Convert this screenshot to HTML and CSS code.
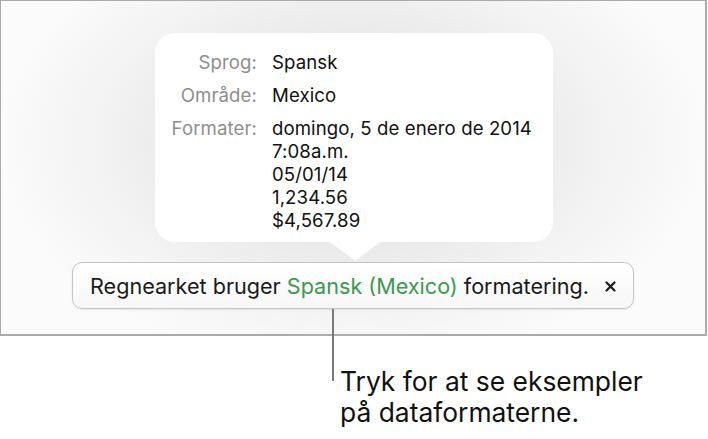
FILE: index.html
```html
<!DOCTYPE html>
<html lang="da">
<head>
<meta charset="utf-8">
<title>Formatering</title>
<link rel="stylesheet" href="styles.css">
</head>
<body>
<div class="frame">
  <div class="popup">
    <div class="label">Sprog:</div>
    <div class="value">Spansk</div>
    <div class="label">Område:</div>
    <div class="value">Mexico</div>
    <div class="label">Formater:</div>
    <div class="value lines">
      <span>domingo, 5 de enero de 2014</span>
      <span>7:08a.m.</span>
      <span>05/01/14</span>
      <span>1,234.56</span>
      <span>$4,567.89</span>
    </div>
  </div>
  <div class="bar">
    <span class="msg">Regnearket bruger <span class="green">Spansk (Mexico)</span> formatering.</span>
    <svg class="close" width="11" height="11" viewBox="0 0 11 11"><path d="M1.5 1.5 L9.5 9.5 M9.5 1.5 L1.5 9.5" stroke="#1a1a1a" stroke-width="2.2" stroke-linecap="round"/></svg>
  </div>
</div>
<div class="callout">
  <div class="line"></div>
  <div class="note">Tryk for at se eksempler<br>på dataformaterne.</div>
</div>
</body>
</html>
```
FILE: styles.css
```css
html, body {
  margin: 0;
  padding: 0;
  background: #ffffff;
}
body {
  font-family: Inter, "Noto Sans", "Liberation Sans", sans-serif;
  width: 708px;
  height: 439px;
  overflow: hidden;
}
.frame {
  box-sizing: border-box;
  width: 707px;
  height: 336px;
  border: 2px solid #ababab;
  border-top-width: 1px;
  border-left-width: 1.5px;
  background: radial-gradient(ellipse 360px 230px at 50% 42%, #e8e8e8 40%, #f4f4f4 75%, #fbfbfb 100%);
  display: flex;
  flex-direction: column;
  align-items: center;
  padding-top: 32px;
}
.popup {
  position: relative;
  width: 398px;
  height: 209px;
  box-sizing: border-box;
  background: #ffffff;
  border-radius: 20px;
  padding: 18px 0 0 0;
  display: grid;
  grid-template-columns: 102px auto;
  column-gap: 15px;
  row-gap: 10px;
  align-content: start;
  font-size: 18.6px;
  letter-spacing: 0.1px;
  line-height: 23px;
  margin-left: 2px;
}
.popup::after {
  content: "";
  position: absolute;
  left: 175px;
  bottom: -19px;
  width: 0;
  height: 0;
  border-left: 25px solid transparent;
  border-right: 25px solid transparent;
  border-top: 19px solid #ffffff;
}
.label {
  text-align: right;
  color: #8e8e8e;
}
.value {
  color: #111111;
}
.lines {
  display: flex;
  flex-direction: column;
}
.bar {
  margin-top: 20px;
  box-sizing: border-box;
  width: 562px;
  height: 47px;
  border: 1px solid #c4c4c4;
  border-radius: 10px;
  background: linear-gradient(#ffffff, #f7f7f7);
  box-shadow: 0 1px 2px rgba(0,0,0,0.08);
  display: flex;
  align-items: center;
  padding-left: 17px;
  gap: 16px;
  font-size: 21.6px;
  color: #1a1a1a;
}
.green {
  color: #3b9a4d;
}
.close {
  display: block;
  margin-top: 1px;
}
.callout {
  display: flex;
  margin-left: 332px;
}
.line {
  width: 2px;
  height: 72px;
  margin-top: -27px;
  background: #7a7a7a;
  flex: none;
}
.note {
  margin-left: 6px;
  margin-top: 30px;
  font-size: 26.4px;
  line-height: 31px;
  color: #111111;
}
```
